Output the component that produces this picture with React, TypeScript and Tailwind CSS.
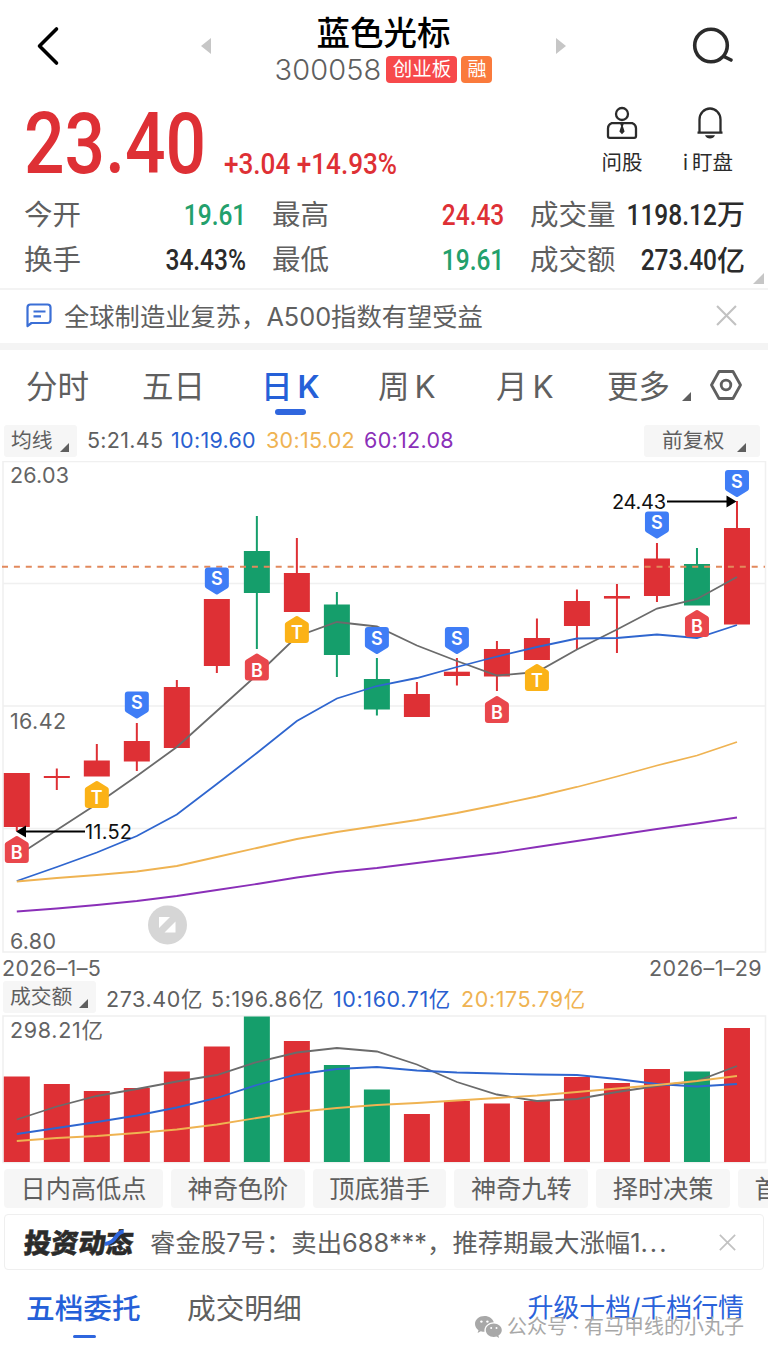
import type { ReactNode } from 'react'
import clsx from 'clsx'

const RED = '#de3035'
const GREEN = '#159e6b'
const GRAY = '#6b6b6b'
const BLUE = '#2f66cf'
const AMBER = '#efb352'
const PURPLE = '#8a2fb8'

type Candle = {
  top: number
  bottom: number
  high: number
  low: number
  up: boolean
  volume: number
}

const candle = (top: number, bottom: number, high: number, low: number, volume: number, up = true): Candle => ({
  top,
  bottom,
  high,
  low,
  up,
  volume,
})

const CANDLES: Candle[] = [
  candle(773, 827, 773, 831, 1076.5),
  candle(776, 778, 768.5, 790, 1084),
  candle(760.5, 776.5, 744, 776, 1091),
  candle(741, 761.5, 723, 771, 1088),
  candle(687, 748, 680, 748, 1071.5),
  candle(599, 666, 599, 673, 1046.5),
  candle(551, 593, 516, 649, 1016.5, false),
  candle(573, 612, 538, 612, 1041),
  candle(604.5, 655, 592, 677, 1065, false),
  candle(679, 709.5, 658, 715.5, 1089.5, false),
  candle(694, 717, 682, 717, 1114),
  candle(671.7, 676, 658, 685.5, 1101),
  candle(649, 676.5, 641, 691, 1103.5),
  candle(638, 660, 618.5, 660, 1101),
  candle(601, 626, 589.5, 649, 1077),
  candle(596, 598.6, 584, 653, 1083),
  candle(558.5, 596, 543, 602, 1069),
  candle(564, 605.5, 548, 605, 1071.5, false),
  candle(528, 624.5, 501, 624, 1028),
]

const PRICE_LINES = [
  { color: GRAY, ys: [856, 830, 804, 776, 747, 711, 675, 636.5, 622, 626.5, 645.5, 661, 675.5, 672, 649.5, 629.5, 608.5, 599, 577] },
  { color: BLUE, ys: [881, 867, 852.5, 836, 814.5, 784, 753, 721, 698.5, 686, 678, 667, 656.5, 647, 638.5, 638, 634.5, 638, 625] },
  { color: AMBER, ys: [881.5, 878, 875, 871.5, 866, 857, 848, 839, 832, 826, 820, 813, 805, 796.5, 787, 776.5, 765.5, 755.5, 742] },
  { color: PURPLE, ys: [911.5, 908.5, 905, 901, 896, 890, 884, 877.5, 872, 868, 863, 858, 853, 847, 841, 835, 829, 823.5, 817.5] },
]

const VOLUME_LINES = [
  { color: GRAY, ys: [1119.5, 1106.5, 1096, 1089, 1081.5, 1075, 1062, 1052.5, 1048, 1051.5, 1064.5, 1082, 1094.5, 1101, 1099, 1092, 1086, 1081, 1066] },
  { color: BLUE, ys: [1134, 1128, 1122, 1115.5, 1107.5, 1098, 1085, 1074.5, 1069, 1067, 1070.5, 1072.5, 1073.5, 1074.5, 1075, 1079, 1084, 1086.5, 1084] },
  { color: AMBER, ys: [1141, 1138, 1136, 1133, 1129.5, 1124.5, 1118, 1112, 1108, 1105, 1103, 1100.5, 1098, 1095.5, 1092, 1088.5, 1085, 1081, 1076] },
]

const MARKERS: { i: number; kind: 'S' | 'B' | 'T'; y: number }[] = [
  { i: 0, kind: 'B', y: 836 },
  { i: 2, kind: 'T', y: 781 },
  { i: 3, kind: 'S', y: 691.5 },
  { i: 5, kind: 'S', y: 567.5 },
  { i: 6, kind: 'B', y: 653.5 },
  { i: 7, kind: 'T', y: 616 },
  { i: 9, kind: 'S', y: 627 },
  { i: 11, kind: 'S', y: 627 },
  { i: 12, kind: 'B', y: 696 },
  { i: 13, kind: 'T', y: 664 },
  { i: 16, kind: 'S', y: 511.5 },
  { i: 17, kind: 'B', y: 610 },
  { i: 18, kind: 'S', y: 470 },
]

const xAt = (i: number) => 16.8 + i * 40.01

const toPoints = (ys: number[]) => ys.map((y, i) => `${xAt(i)},${y}`).join(' ')

function Corner({ className }: { className?: string }) {
  return (
    <svg viewBox="0 0 9 9" className={clsx('shrink-0', className)}>
      <path d="M9 0v9H0z" fill="currentColor" />
    </svg>
  )
}

function CloseIcon({ className }: { className?: string }) {
  return (
    <svg viewBox="0 0 20 20" fill="none" stroke="#c2c2c2" strokeWidth="2" className={className}>
      <path d="M1 1l18 18M19 1L1 19" />
    </svg>
  )
}

function Marker({ x, y, kind }: { x: number; y: number; kind: 'S' | 'B' | 'T' }) {
  const down = kind === 'S'
  const fill = kind === 'S' ? '#3f7df6' : kind === 'B' ? '#e9474c' : '#fbb217'
  return (
    <g transform={`translate(${x - 12} ${y})`}>
      <path
        d={
          down
            ? 'M3 0h18q3 0 3 3v15.500q0 1.500-1.300 2.200L13 26.700q-1 .6-2 0L1.300 20.700Q0 20 0 18.500V3q0-3 3-3z'
            : 'M3 27h18q3 0 3-3V8.500q0-1.500-1.300-2.200L13 .3q-1-.6-2 0L1.300 6.300Q0 7 0 8.500V24q0 3 3 3z'
        }
        fill={fill}
      />
      <text x="12" y={down ? 17.6 : 23} textAnchor="middle" fontSize="18" fontWeight="600" fill="#fff">
        {kind}
      </text>
    </g>
  )
}

function Header() {
  return (
    <header className="flex h-[88px] items-start justify-between pl-9 pr-[34px]">
      <svg viewBox="0 0 24 40" fill="none" stroke="#000" strokeWidth="3.6" strokeLinecap="round" strokeLinejoin="round" className="mt-[26px] h-10 w-6">
        <path d="M20.500 3L3.500 20l17 17" />
      </svg>
      <div className="flex items-start pl-[15px]">
        <svg viewBox="0 0 10 16" className="mt-[38px] h-4 w-[10px]">
          <path d="M10 0v16L0 8z" fill="#c6c6c6" />
        </svg>
        <div className="flex w-[345px] flex-col items-center">
          <h1 className="mt-[9px] h-[47px] text-[33.500px] font-medium leading-[49px] text-black">蓝色光标</h1>
          <div className="flex h-[27px] items-center">
            <span className="mr-[5px] text-[29px] font-light leading-7 tracking-[0.1px] text-[#5f5f5f]">300058</span>
            <span className="mr-1 flex h-[27px] w-[71px] items-center justify-center rounded-[4px] bg-[#f7494b] pt-px text-[19.500px] text-white">创业板</span>
            <span className="flex h-[27px] w-[31px] items-center justify-center rounded-[4px] bg-[#fa7a3c] pt-px text-[19px] text-white">融</span>
          </div>
        </div>
        <svg viewBox="0 0 10 16" className="mt-[38px] h-4 w-[10px]">
          <path d="M0 0v16l10-8z" fill="#c6c6c6" />
        </svg>
      </div>
      <svg viewBox="0 0 42 38" fill="none" stroke="#2b2b2b" strokeWidth="3.600" strokeLinecap="round" className="mt-[27px] h-[38px] w-[42px]">
        <circle cx="19" cy="18.500" r="16.300" />
        <path d="M33 30l6 3" />
      </svg>
    </header>
  )
}

function Price() {
  return (
    <div className="flex h-[104px] items-start pl-6 font-[Roboto] text-[#de3035]">
      <div className="mt-[13px] w-[200px] shrink-0">
        <span className="inline-block origin-left scale-x-[0.83] whitespace-nowrap text-[86px] font-medium leading-[86px]">23.40</span>
      </div>
      <div className="mt-[58px] w-[375px] shrink-0">
        <span className="inline-block origin-left scale-x-[0.885] whitespace-nowrap text-[29.500px] font-medium leading-[36px]">+3.04 +14.93%</span>
      </div>
      <div className="flex gap-[39px] pt-[18px] font-[Inter,'Noto_Sans_CJK_SC',sans-serif] text-[#2b2b2b]">
        <div className="flex w-[46px] flex-col items-center">
          <svg viewBox="0 0 32 34" fill="none" stroke="currentColor" strokeWidth="2.300" className="h-[34px] w-8">
            <circle cx="16" cy="8" r="6" />
            <path d="M5.500 17.200h21q3.500 1.500 3.500 5V30q0 1.800-1.800 1.800H3.800Q2 31.800 2 30v-7.800q0-3.500 3.500-5z" />
            <path d="M14.300 18h3.400l-.8 2.200 1.700 5.300-2.600 2.700-2.600-2.700 1.700-5.300z" fill="currentColor" stroke="none" />
          </svg>
          <span className="mt-[9px] whitespace-nowrap text-[20.500px] leading-7">问股</span>
        </div>
        <div className="flex w-[52px] flex-col items-center">
          <svg viewBox="0 0 28 34" fill="none" stroke="currentColor" strokeWidth="2.300" className="h-[34px] w-7">
            <path d="M3.500 26V13.500a10.500 11 0 0121 0V26M1.500 26.600h25" />
            <path d="M9 29.200h10q-1.500 3.300-5 3.300t-5-3.300z" fill="currentColor" stroke="none" />
          </svg>
          <span className="mr-1 mt-[9px] whitespace-nowrap text-[20.500px] leading-7">
            <span className="mr-1">i</span>盯盘
          </span>
        </div>
      </div>
    </div>
  )
}

function Stat({ label, value, unit, className }: { label: string; value: string; unit?: string; className: string }) {
  return (
    <div className="flex h-[45.500px] items-center whitespace-nowrap">
      <span className="pt-px text-[28.500px] text-[#5f5f5f]">{label}</span>
      <span className={clsx('flex w-0 flex-1 items-center justify-end', className)}>
        <span className="inline-block origin-right scale-x-[0.83] font-[Roboto] text-[29.500px] font-medium">{value}</span>
        {unit && <span className="pt-px text-[28px] font-medium">{unit}</span>}
      </span>
    </div>
  )
}

function Stats() {
  return (
    <div className="relative grid h-[96px] grid-cols-[222px_232px_215px] content-start gap-x-[26px] pl-6">
      <Stat label="今开" value="19.61" className="text-[#23a06c]" />
      <Stat label="最高" value="24.43" className="text-[#de3035]" />
      <Stat label="成交量" value="1198.12" unit="万" className="text-[#2b2b2b]" />
      <Stat label="换手" value="34.43%" className="text-[#2b2b2b]" />
      <Stat label="最低" value="19.61" className="text-[#23a06c]" />
      <Stat label="成交额" value="273.40" unit="亿" className="text-[#2b2b2b]" />
      <Corner className="absolute bottom-1 right-1 size-[11px] text-[#c6c6c6]" />
    </div>
  )
}

function NewsBar() {
  return (
    <div className="flex h-[62px] items-center border-b-[7px] border-t-2 border-b-[#f4f4f4] border-t-[#f3f3f3] pl-[26px] pr-[31px]">
      <svg viewBox="0 0 26 25" fill="none" stroke="#3b6fd6" strokeWidth="2.200" strokeLinejoin="round" className="mb-[2px] mr-3 h-[25px] w-[26px]">
        <path d="M1.500 23V4.500q0-3 3-3h17q3 0 3 3V17q0 3-3 3h-16z" />
        <path d="M7.500 8.500h12M7.500 13.300h7.500" />
      </svg>
      <p className="flex-1 whitespace-nowrap text-[25.300px] leading-9 text-[#5f5f5f]">全球制造业复苏，A500指数有望受益</p>
      <CloseIcon className="mb-[2px] size-[21px]" />
    </div>
  )
}

function PeriodTabs() {
  return (
    <nav className="flex h-[74px] items-start pl-[26px] text-[31.500px] leading-[73px] text-[#5f5f5f]">
      <span className="w-[116px]">分时</span>
      <span className="w-[119px]">五日</span>
      <span className="flex w-[117px] flex-col font-medium text-[#2560d8]">
        <span className="flex h-[59px] gap-[5px]">
          日<span className="font-semibold">K</span>
        </span>
        <span className="ml-[14px] h-[6px] w-[31px] rounded-full bg-[#2f66de]" />
      </span>
      <span className="flex w-[118px] gap-[5px]">
        周<span>K</span>
      </span>
      <span className="flex w-[111px] gap-[5px]">
        月<span>K</span>
      </span>
      <span>更多</span>
      <Corner className="ml-[12px] mt-[42px] size-[9px]" />
      <svg viewBox="0 0 32 30" fill="none" stroke="currentColor" strokeWidth="2.800" strokeLinejoin="round" className="ml-[19px] mt-5 h-[30px] w-8">
        <path d="M9 1.500h14L30.500 15 23 28.500H9L1.500 15z" />
        <circle cx="16" cy="15" r="4.800" />
      </svg>
    </nav>
  )
}

function Picker({ children, className }: { children: ReactNode; className: string }) {
  return (
    <span className={clsx('flex h-8 shrink-0 items-center rounded-[3px] bg-[#f6f6f6] text-[20.800px] leading-7 tracking-normal text-[#5f5f5f]', className)}>
      {children}
      <Corner className="mt-[13px] size-[9px]" />
    </span>
  )
}

function AverageRow() {
  return (
    <div className="flex h-[37px] items-start pl-1 pr-2 pt-px text-[21.500px] leading-[30px] tracking-[0.3px] text-[#5f5f5f]">
      <Picker className="w-[73px] gap-[7px] pl-[7px]">均线</Picker>
      <span className="ml-[10px] w-[84px]">5:21.45</span>
      <span className="w-[95px] text-[#2a5fd0]">10:19.60</span>
      <span className="w-[98px] text-[#efb352]">30:15.02</span>
      <span className="flex-1 text-[#8a2fb8]">60:12.08</span>
      <Picker className="w-[116px] gap-[13px] pl-[18px]">前复权</Picker>
    </div>
  )
}

function PriceChart() {
  return (
    <svg viewBox="0 461 768 492" className="block h-[492px] w-full" fontSize="21.500">
      <path d="M3 461.500H765.500V952H3zM3 583.500H765M3 706H765M3 828.500H765" fill="none" stroke="#f0f0f0" strokeWidth="1.500" />
      {CANDLES.map((c, i) => (
        <g key={i} fill={c.up ? RED : GREEN}>
          <rect x={xAt(i) - 1} y={c.high} width="2" height={c.low - c.high} />
          <rect x={xAt(i) - 13} y={c.top} width="26" height={c.bottom - c.top} />
        </g>
      ))}
      <path d="M2 566.800H765" stroke="#e2895c" strokeWidth="2" strokeDasharray="6 5.900" />
      {PRICE_LINES.map(({ color, ys }) => (
        <polyline key={color} points={toPoints(ys)} fill="none" stroke={color} strokeWidth="1.800" />
      ))}
      {MARKERS.map((m) => (
        <Marker key={m.i} x={xAt(m.i)} y={m.y} kind={m.kind} />
      ))}
      <path d="M667 501.500h61M24 831.500h61" stroke="#000" strokeWidth="2" />
      <path d="M726.500 495.500l10 6-10 6zM26 825.500l-10 6 10 6z" fill="#000" />
      <g fill="#111" fontSize="20">
        <text x="612" y="509" textLength="54">24.43</text>
        <text x="85" y="839" textLength="47">11.52</text>
      </g>
      <g fill="#646464">
        <text x="10" y="483" textLength="59">26.03</text>
        <text x="10" y="729" textLength="56">16.42</text>
        <text x="10" y="948.500" textLength="46">6.80</text>
      </g>
      <circle cx="167.500" cy="925" r="19.500" fill="#d6d6d6" />
      <path d="M159 917h11l-11 11zM175.500 921.500v11h-11z" fill="#fff" />
    </svg>
  )
}

function VolumeChart() {
  return (
    <svg viewBox="0 1015 768 149" className="block h-[149px] w-full" fontSize="21.500">
      <path d="M3 1016H765.500V1162.500H3z" fill="none" stroke="#f0f0f0" strokeWidth="1.500" />
      {CANDLES.map((c, i) => (
        <rect key={i} x={xAt(i) - 13} y={c.volume} width="26" height={1162 - c.volume} fill={c.up ? RED : GREEN} />
      ))}
      {VOLUME_LINES.map(({ color, ys }) => (
        <polyline key={color} points={toPoints(ys)} fill="none" stroke={color} strokeWidth="1.800" />
      ))}
      <text x="10" y="1038" fill="#646464" textLength="93">298.21亿</text>
    </svg>
  )
}

function VolumeLegend() {
  return (
    <div className="flex h-8 items-start pl-[3px] text-[21.500px] leading-8 tracking-[0.6px] text-[#5f5f5f]">
      <Picker className="-mt-[2px] w-[93px] gap-[7px] pl-[7px]">成交额</Picker>
      <span className="ml-[10px] w-[105px]">273.40亿</span>
      <span className="w-[122px]">5:196.86亿</span>
      <span className="w-[128px] text-[#2a5fd0]">10:160.71亿</span>
      <span className="text-[#efb352]">20:175.79亿</span>
    </div>
  )
}

const CHIPS = ['日内高低点', '神奇色阶', '顶底猎手', '神奇九转', '择时决策', '首板']

function Chips() {
  return (
    <div className="flex h-[50px] gap-2 overflow-hidden pl-1 pt-[5px]">
      {CHIPS.map((chip) => (
        <span key={chip} className="flex h-[39px] shrink-0 items-center rounded-[4px] bg-[#f6f6f6] px-[16.500px] pt-[3px] text-[25.200px] text-[#5f5f5f]">
          {chip}
        </span>
      ))}
    </div>
  )
}

function Activity() {
  return (
    <div className="mx-1 flex h-[56px] items-center rounded-[4px] border-[1.500px] border-[#efefef] pl-[19px] pr-[27px]">
      <div className="relative w-[126px] pt-[3px]">
        <span className="inline-block -skew-x-6 text-[27.300px] font-black leading-9 text-[#2b2b2b] [-webkit-text-stroke:0.5px_#2b2b2b]">投资动态</span>
        <svg viewBox="0 0 20 16" fill="none" className="absolute left-[81px] top-[7px] h-4 w-5">
          <path d="M0 14q7-1 10.500-6.500T18.500 1.500" stroke="#2f66de" strokeWidth="4" />
        </svg>
      </div>
      <p className="flex-1 whitespace-nowrap pt-[2px] text-[25.400px] leading-9 text-[#5f5f5f]">
        睿金股7号：卖出688***，推荐期最大涨幅1<span className="tracking-[2px]">...</span>
      </p>
      <CloseIcon className="size-[17px]" />
    </div>
  )
}

function BottomBar() {
  return (
    <div className="relative flex h-[93px] items-start pl-[26px] text-[28.700px] leading-10 text-[#5f5f5f]">
      <span className="mt-[19px] flex w-[161px] flex-col font-medium text-[#2560d8]">
        五档委托
        <span className="ml-[47px] mt-[6px] h-[3px] w-[23px] rounded-full bg-[#2f66de]" />
      </span>
      <span className="mt-[19px] flex-1">成交明细</span>
      <span className="mr-6 mt-[18px] text-[25.900px] text-[#2a62da]">升级十档/千档行情</span>
      <div className="absolute right-[24px] top-[43px] flex items-center text-[20px] leading-7 text-[#a8a8a8]">
        <svg viewBox="0 0 27 22" className="mr-[5px] h-[22px] w-[27px]">
          <path d="M9.500 0C4.200 0 0 3.500 0 8c0 2.500 1.400 4.700 3.500 6.200l-.9 2.800 3.200-1.700c1.200.4 2.400.5 3.700.5-.9-5 3.500-9.600 9.300-9.600C17.800 2.700 14 0 9.500 0z" fill="#a8a8a8" />
          <path d="M18.800 7.500c-4.500 0-8 3-8 6.700s3.500 6.700 8 6.700c1 0 1.900-.1 2.700-.4l2.600 1.400-.7-2.300c2-1.300 3.400-3.200 3.400-5.400 0-3.700-3.500-6.700-8-6.700z" fill="#a8a8a8" />
          <g fill="#fff">
            <circle cx="6.400" cy="5.600" r="1.200" />
            <circle cx="12.400" cy="5.600" r="1.200" />
            <circle cx="16.200" cy="12" r="1" />
            <circle cx="21.500" cy="12" r="1" />
          </g>
        </svg>
        <span className="whitespace-nowrap">公众号 · 有马甲线的小丸子</span>
      </div>
    </div>
  )
}

export default function App() {
  return (
    <main className="h-[1362px] w-[768px] overflow-hidden bg-white font-[Inter,'Noto_Sans_CJK_SC',sans-serif]">
      <Header />
      <Price />
      <Stats />
      <NewsBar />
      <PeriodTabs />
      <AverageRow />
      <PriceChart />
      <div className="flex h-[30px] justify-between pl-[2px] pr-[6px] text-[21.500px] leading-[30px] tracking-[0.35px] text-[#646464]">
        <span>2026–1–5</span>
        <span>2026–1–29</span>
      </div>
      <VolumeLegend />
      <VolumeChart />
      <Chips />
      <Activity />
      <BottomBar />
    </main>
  )
}
